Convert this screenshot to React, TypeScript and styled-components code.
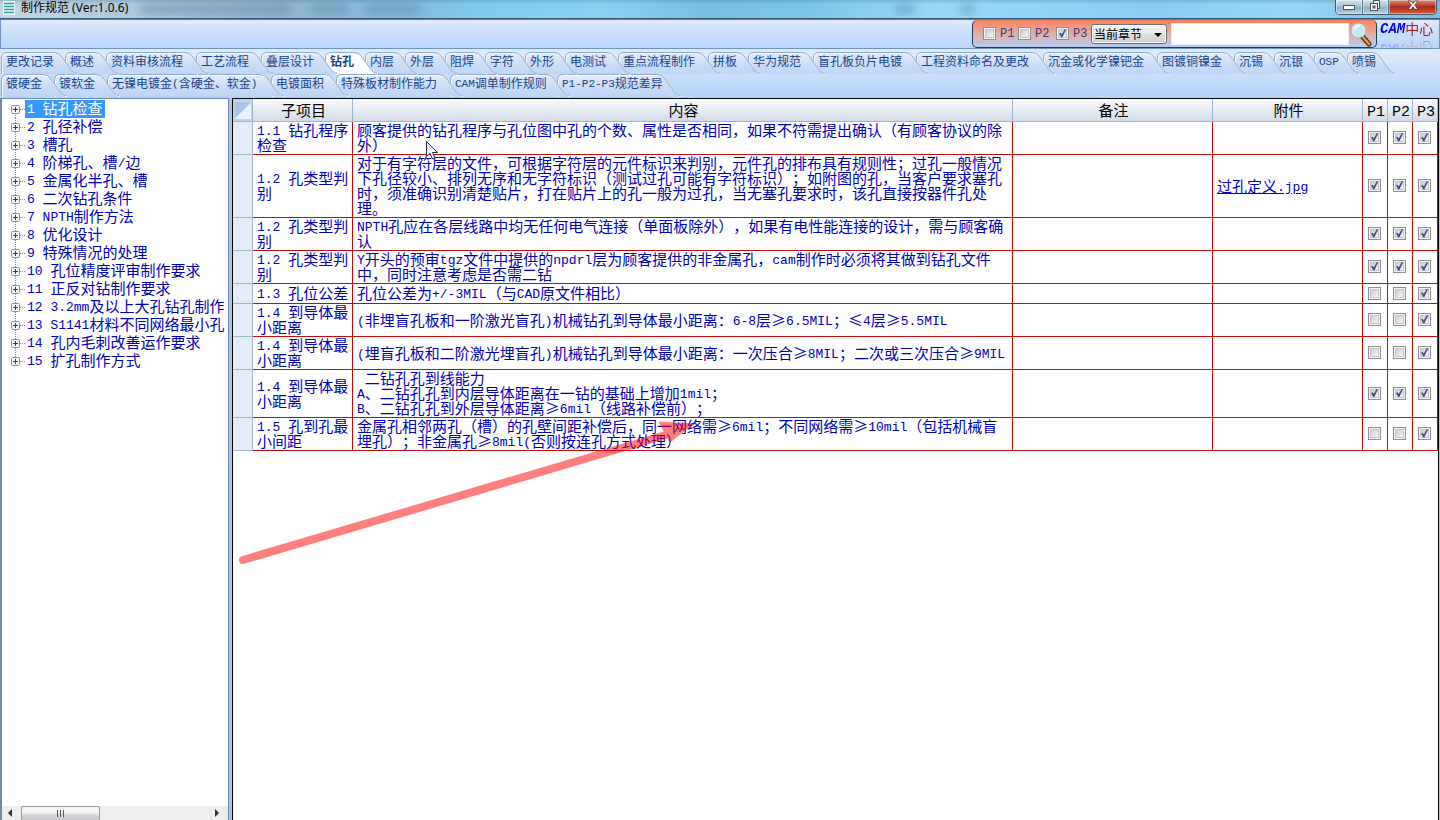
import React, { useState } from 'react';
import styled, { createGlobalStyle, css } from 'styled-components';

const cjk = '"Noto Sans CJK SC", sans-serif';

const GlobalStyle = createGlobalStyle`
  *, *::before, *::after { box-sizing: border-box; }
  html, body { margin: 0; height: 100%; }
  body { font-family: ${cjk}; font-size: 12px; text-spacing-trim: space-all; background: #fff; overflow: hidden; }
  #root { height: 100%; }
  button, input, select { font: inherit; margin: 0; }
`;

const Window = styled.div`
  display: flex;
  flex-direction: column;
  height: 100vh;
`;

/* ---------- title bar ---------- */

const TitleBar = styled.header`
  position: relative;
  display: flex;
  align-items: flex-start;
  height: 19px;
  flex: none;
  padding: 0 3px;
  gap: 6px;
  overflow: hidden;
  border-bottom: 1px solid #33597e;
  background: linear-gradient(to bottom, rgba(60, 110, 150, 0.3), transparent 4px),
    linear-gradient(to right, #c3d6e3 0, #a9c6da 11%, #8fb6d2 20%, #86bcdc 29%, #7fcbea 33%, #88d2f0 42%, #76bfdf 49%, #7cc6e5 56%, #98d8f3 65%, #8acdf0 80%, #96d6f2 90%, #7fbcd9 100%);
`;

const Haze = styled.span<{ $x: number; $w: number }>`
  position: absolute;
  left: ${(p) => p.$x}px;
  top: 5px;
  width: ${(p) => p.$w}px;
  height: 8px;
  background: #46698a;
  opacity: 0.4;
  filter: blur(4px);
`;

const AppIcon = styled.svg`
  flex: none;
  margin-top: 1px;
`;

const Title = styled.h1`
  position: relative;
  flex: 1;
  margin: 0;
  font: 400 12px/16px "Noto Sans", ${cjk};
  color: #000;
`;

const WindowButtons = styled.div`
  position: relative;
  display: flex;
  width: 102px;
  height: 15px;
  border: 1px solid #44586a;
  border-top: 0;
  border-radius: 0 0 5px 5px;
  overflow: hidden;
`;

const WindowButton = styled.button<{ $close?: boolean }>`
  display: flex;
  align-items: center;
  justify-content: center;
  flex: ${(p) => (p.$close ? '0 0 47px' : '1')};
  padding: 0 0 3px;
  border: 0;
  border-right: ${(p) => (p.$close ? '0' : '1px solid #5c7385')};
  box-shadow: inset 0 0 0 1px rgba(255, 255, 255, 0.45);
  background: ${(p) =>
    p.$close
      ? 'linear-gradient(#d58a7c 0, #c4543f 30%, #b02a14 50%, #cf5a3c 100%)'
      : 'linear-gradient(#cfe0ea 0, #b4cedd 35%, #92b3c6 55%, #b5d4e4 100%)'};
`;

/* ---------- tool bar ---------- */

const ToolBar = styled.div`
  display: flex;
  justify-content: flex-end;
  flex: none;
  height: 30px;
  border: 1px solid #6f94c4;
  border-top-color: #5c83b4;
  background: linear-gradient(#e0ebfc, #cadffd 45%, #b9d6fc);
`;

const SearchPanel = styled.form`
  display: flex;
  align-items: center;
  width: 405px;
  height: 28px;
  padding: 0 4px 0 10px;
  border: solid #1c3763;
  border-width: 0 1px 1px;
  border-radius: 5px;
  background: linear-gradient(#f47e5c 0, #f29a80 25%, #d9b4b4 60%, #b4cdf6 100%);
`;

const CheckLabel = styled.label<{ $width: number }>`
  display: flex;
  align-items: center;
  gap: 4px;
  width: ${(p) => p.$width}px;
  font: 12px/14px "Liberation Mono", monospace;
  color: #3d3a74;
`;

const Check = styled.input.attrs({ type: 'checkbox' })`
  appearance: none;
  position: relative;
  display: block;
  flex: none;
  width: 13px;
  height: 13px;
  border: 1px solid #8e8f8f;
  background: #f4f4f4;
  &::before {
    content: '';
    position: absolute;
    inset: 1px;
    border: 1px solid #c3c8cc;
    background: linear-gradient(135deg, #c9cdd2, #f6f6f6);
  }
  &:checked::after {
    content: '';
    position: absolute;
    inset: 1px;
    background: #3c4f8c;
    clip-path: polygon(12% 50%, 28% 42%, 42% 62%, 74% 4%, 92% 4%, 48% 94%, 36% 94%);
  }
`;

const Scope = styled.div`
  position: relative;
  width: 76px;
  height: 20px;
  &::after {
    content: '';
    position: absolute;
    right: 5px;
    top: 9px;
    border: 4px solid transparent;
    border-top-color: #000;
    pointer-events: none;
  }
`;

const ScopeSelect = styled.select`
  appearance: none;
  width: 100%;
  height: 20px;
  padding: 0 2px;
  border: 1px solid #707070;
  border-radius: 3px;
  box-shadow: inset 0 0 0 1px #fcfcfc;
  background: linear-gradient(#f2f2f2 0, #ebebeb 50%, #dddddd 50%, #cfcfcf);
  font-size: 12px;
  line-height: 16px;
  color: #000;
`;

const SearchInput = styled.input`
  flex: 1;
  min-width: 0;
  height: 22px;
  margin-left: 4px;
  padding: 0 3px;
  border: 1px solid #e8eef8;
  border-radius: 0;
  background: #fff;
`;

const SearchButton = styled.button`
  width: 23px;
  height: 26px;
  padding: 0;
  border: 0;
  background: none;
`;

const Logo = styled.div`
  display: flex;
  align-items: center;
  width: 62px;
  height: 18px;
  padding-left: 3px;
  white-space: nowrap;
  -webkit-box-reflect: below 1px linear-gradient(transparent 40%, rgba(0, 0, 0, 0.45));
`;

const LogoLatin = styled.span`
  font: italic 700 14px/18px "Liberation Mono", monospace;
  color: #0000f0;
`;

const LogoCjk = styled.span`
  height: 18px;
  font-size: 14px;
  line-height: 16px;
  color: #a51c24;
`;

/* ---------- tabs ---------- */

const TabArea = styled.nav`
  flex: none;
  padding: 3px 0 2px 1px;
  background: linear-gradient(#dfebfc, #b5d3fb);
`;

const TabRow = styled.div`
  display: flex;
  height: 22px;
`;

const TabButton = styled.button<{ $width: number; $order: number; $active?: boolean }>`
  position: relative;
  z-index: ${(p) => p.$order};
  flex: none;
  width: ${(p) => p.$width}px;
  height: 22px;
  padding: 0 0 4px 5px;
  border: 0;
  background: none;
  text-align: left;
  white-space: nowrap;
  font-size: 12px;
  line-height: 18px;
  color: #15428b;
  ${(p) =>
    p.$active &&
    css`
      font-weight: 700;
    `}
`;

const TabShape = styled.svg`
  position: absolute;
  left: 0;
  top: 0;
  overflow: visible;
`;

const TabText = styled.span`
  position: relative;
`;

const Latin = styled.span`
  font-family: "Liberation Mono", monospace;
  font-size: 13px;
  line-height: 8px;
  vertical-align: 1px;
  ${TabText} & {
    font-size: 11px;
  }
  th & {
    font-size: 15px;
    vertical-align: baseline;
  }
`;

/* ---------- body ---------- */

const Body = styled.main`
  display: flex;
  flex: 1;
  min-height: 0;
  background: linear-gradient(to right, #8298bd 0, #8298bd 1px, #a9c5ea 1px);
`;

const TreePanel = styled.aside`
  display: flex;
  flex-direction: column;
  flex: none;
  width: 229px;
  border: solid #7288a8;
  border-width: 1px 1px 0 2px;
  background: #fff;
`;

const Tree = styled.ul`
  flex: 1;
  min-height: 0;
  margin: 0;
  padding: 1px 0 0 9px;
  list-style: none;
  overflow: hidden;
`;

const TreeItem = styled.li`
  display: flex;
  align-items: center;
  height: 18px;
`;

const Expander = styled.button`
  flex: none;
  width: 14px;
  height: 18px;
  padding: 0;
  border: 0;
  background: none;
  svg {
    display: block;
  }
`;

const TreeText = styled.span<{ $selected?: boolean }>`
  height: 18px;
  padding: 0 2px;
  font-size: 15px;
  line-height: 16px;
  white-space: pre;
  color: ${(p) => (p.$selected ? '#fff' : '#0000b4')};
  background: ${(p) => (p.$selected ? '#3399ff' : 'none')};
`;

const ScrollBar = styled.div`
  display: flex;
  align-items: center;
  flex: none;
  height: 14px;
  background: #ededed;
`;

const ScrollArrow = styled.button<{ $right?: boolean }>`
  flex: none;
  width: 19px;
  height: 14px;
  padding: 0 0 0 6px;
  border: 0;
  background: none;
  &::before {
    content: '';
    display: block;
    width: 4px;
    height: 8px;
    background: #333;
    clip-path: ${(p) =>
      p.$right ? 'polygon(0 0, 100% 50%, 0 100%)' : 'polygon(100% 0, 0 50%, 100% 100%)'};
  }
`;

const ScrollTrack = styled.div`
  flex: 1;
  height: 14px;
`;

const ScrollThumb = styled.div`
  display: flex;
  align-items: center;
  justify-content: center;
  gap: 2px;
  width: 79px;
  height: 14px;
  border: 1px solid #979797;
  border-bottom: 0;
  border-radius: 2px 2px 0 0;
  background: linear-gradient(#f5f5f5 45%, #dcdcdc 55%, #c6c6ca);
  i {
    width: 1px;
    height: 7px;
    background: #555;
  }
`;

const GridPanel = styled.section`
  position: relative;
  flex: 1;
  min-width: 0;
  margin-left: 3px;
  margin-right: 1px;
  border: 1px solid #000;
  border-bottom: 0;
  background: #fff;
`;

const Table = styled.table`
  width: 100%;
  table-layout: fixed;
  border-collapse: separate;
  border-spacing: 0;
  font-size: 15px;
  line-height: 15px;
`;

const HeadCell = styled.th`
  height: 23px;
  padding: 0 0 1px 2px;
  border: solid #9eb6ce;
  border-width: 0 1px 1px 0;
  background: linear-gradient(#f9fbfd, #e7ecf4 50%, #d3dbe9);
  font-weight: 400;
  white-space: nowrap;
  color: #000;
`;

const Corner = styled(HeadCell)`
  background: linear-gradient(135deg, #a9c4e9 50%, #e9f1fb 50%) center / 16px 17px no-repeat, #bcd2ee;
`;

const RowHead = styled.th`
  padding: 0;
  border: solid #9eb6ce;
  border-width: 0 1px 1px 0;
  background: #e4ecf7;
`;

const Cell = styled.td`
  height: 20px;
  padding: 0 3px 2px 4px;
  border: solid #c00d0d;
  border-width: 0 1px 1px 0;
  vertical-align: middle;
  white-space: pre;
  color: #0000b4;
`;

const CheckCell = styled(Cell)`
  padding: 0 5px 1px;
`;

const FileLink = styled.a`
  color: #0000c8;
  text-decoration: underline;
`;

const Overlay = styled.svg`
  position: absolute;
  left: 0;
  top: 0;
  pointer-events: none;
`;

/* ---------- data ---------- */

type TabItem = [label: string, width: number];

const tabRows: TabItem[][] = [
  [
    ['更改记录', 64], ['概述', 41], ['资料审核流程', 90], ['工艺流程', 65], ['叠层设计', 64],
    ['钻孔', 40], ['内层', 40], ['外层', 40], ['阻焊', 40], ['字符', 40], ['外形', 40],
    ['电测试', 53], ['重点流程制作', 90], ['拼板', 40], ['华为规范', 65], ['盲孔板负片电镀', 103],
    ['工程资料命名及更改', 127], ['沉金或化学镍钯金', 114], ['图镀铜镍金', 77], ['沉锡', 40],
    ['沉银', 40], ['OSP', 33], ['喷锡', 36],
  ],
  [
    ['镀硬金', 53], ['镀软金', 53], ['无镍电镀金(含硬金、软金)', 164], ['电镀面积', 65],
    ['特殊板材制作能力', 114], ['CAM调单制作规则', 107], ['P1-P2-P3规范差异', 111],
  ],
];

const treeItems = [
  '1 钻孔检查', '2 孔径补偿', '3 槽孔', '4 阶梯孔、槽/边', '5 金属化半孔、槽', '6 二次钻孔条件',
  '7 NPTH制作方法', '8 优化设计', '9 特殊情况的处理', '10 孔位精度评审制作要求', '11 正反对钻制作要求',
  '12 3.2mm及以上大孔钻孔制作', '13 S1141材料不同网络最小孔', '14 孔内毛刺改善运作要求', '15 扩孔制作方式',
];

interface Rule {
  item: string;
  content: string;
  file?: string;
  levels: [boolean, boolean, boolean];
}

const rules: Rule[] = [
  { item: '1.1 钻孔程序\n检查', content: '顾客提供的钻孔程序与孔位图中孔的个数、属性是否相同，如果不符需提出确认（有顾客协议的除\n外）', levels: [true, true, true] },
  { item: '1.2 孔类型判\n别', content: '对于有字符层的文件，可根据字符层的元件标识来判别，元件孔的排布具有规则性；过孔一般情况\n下孔径较小、排列无序和无字符标识（测试过孔可能有字符标识）；如附图的孔，当客户要求塞孔\n时，须准确识别清楚贴片，打在贴片上的孔一般为过孔，当无塞孔要求时，该孔直接按器件孔处\n理。', file: '过孔定义.jpg', levels: [true, true, true] },
  { item: '1.2 孔类型判\n别', content: 'NPTH孔应在各层线路中均无任何电气连接（单面板除外），如果有电性能连接的设计，需与顾客确\n认', levels: [true, true, true] },
  { item: '1.2 孔类型判\n别', content: 'Y开头的预审tgz文件中提供的npdrl层为顾客提供的非金属孔，cam制作时必须将其做到钻孔文件\n中，同时注意考虑是否需二钻', levels: [true, true, true] },
  { item: '1.3 孔位公差', content: '孔位公差为+/-3MIL（与CAD原文件相比）', levels: [false, false, true] },
  { item: '1.4 到导体最\n小距离', content: '(非埋盲孔板和一阶激光盲孔)机械钻孔到导体最小距离：6-8层≥6.5MIL；≤4层≥5.5MIL', levels: [false, false, true] },
  { item: '1.4 到导体最\n小距离', content: '(埋盲孔板和二阶激光埋盲孔)机械钻孔到导体最小距离：一次压合≥8MIL；二次或三次压合≥9MIL', levels: [false, false, true] },
  { item: '1.4 到导体最\n小距离', content: ' 二钻孔孔到线能力\nA、二钻孔孔到内层导体距离在一钻的基础上增加1mil；\nB、二钻孔孔到外层导体距离≥6mil（线路补偿前）；', levels: [true, true, true] },
  { item: '1.5 孔到孔最\n小间距', content: '金属孔相邻两孔（槽）的孔壁间距补偿后，同一网络需≥6mil；不同网络需≥10mil（包括机械盲\n埋孔）；非金属孔≥8mil(否则按连孔方式处理）', levels: [false, false, true] },
];

const levelNames = ['P1', 'P2', 'P3'];

/* ---------- components ---------- */

/** Sets half-width runs in the monospaced face and leaves full-width text as is. */
function Mixed({ text }: { text: string }) {
  return (
    <>
      {text.split(/([ -~]+)/).map((run, i) => (i % 2 ? <Latin key={i}>{run}</Latin> : run))}
    </>
  );
}

function Tab({ label, width, order, active, onSelect }: {
  label: string; width: number; order: number; active: boolean; onSelect: () => void;
}) {
  const edge = `M.5 22V6Q.5 .5 6 .5H${width - 11}Q${width - 6} .5 ${width - 3} 5L${width + 7} 19Q${width + 9} 21 ${width + 12} 21.5`;
  return (
    <TabButton $width={width} $order={order} $active={active} onClick={onSelect}>
      <TabShape width={width} height="22" aria-hidden="true">
        <path d={`${edge}V22H.5Z`} fill={active ? '#fff' : 'url(#tabFill)'} />
        <path d={edge} fill="none" stroke="#fff" strokeOpacity=".8" transform="translate(1 1)" />
        <path d={edge} fill="none" stroke="#93abd0" />
      </TabShape>
      <TabText><Mixed text={label} /></TabText>
    </TabButton>
  );
}

export default function App() {
  const [activeTab, setActiveTab] = useState('钻孔');
  const [selected, setSelected] = useState(0);

  return (
    <Window>
      <GlobalStyle />
      <TitleBar>
        <Haze $x={140} $w={150} />
        <Haze $x={312} $w={36} />
        <Haze $x={366} $w={54} />
        <Haze $x={895} $w={20} />
        <Haze $x={960} $w={14} />
        <AppIcon width="12" height="14" viewBox="0 0 12 14" aria-hidden="true">
          <rect width="12" height="14" fill="#eefafa" />
          <path d="M1 2.5h10M1 5.5h10M1 8.5h10M1 11.5h10" stroke="#2b9aa5" strokeWidth="1.5" />
        </AppIcon>
        <Title>制作规范 (Ver:1.0.6)</Title>
        <WindowButtons>
          <WindowButton aria-label="最小化">
            <svg width="14" height="11"><rect x="1.5" y="5.5" width="11" height="4" fill="#fff" stroke="#46525e" /></svg>
          </WindowButton>
          <WindowButton aria-label="还原">
            <svg width="12" height="12">
              <path d="M4.500 .5H10.500V8.500H8M4.500 3V.5" fill="#fff" stroke="#46525e" />
              <rect x="1.500" y="3.500" width="7" height="7" fill="#fff" stroke="#46525e" />
              <rect x="4" y="6" width="2" height="2" fill="#9ab" stroke="#46525e" />
            </svg>
          </WindowButton>
          <WindowButton $close aria-label="关闭">
            <svg width="14" height="11"><path d="M2 1H5L7 3.500L9 1H12L8.800 5L12 9.500H9L7 7L5 9.500H2L5.200 5Z" fill="#fff" stroke="#5b2a2a" strokeWidth=".8" /></svg>
          </WindowButton>
        </WindowButtons>
      </TitleBar>

      <ToolBar>
        <SearchPanel onSubmit={(e) => e.preventDefault()}>
          <CheckLabel $width={35}><Check />P1</CheckLabel>
          <CheckLabel $width={38}><Check />P2</CheckLabel>
          <CheckLabel $width={35}><Check defaultChecked />P3</CheckLabel>
          <Scope>
            <ScopeSelect aria-label="范围"><option>当前章节</option></ScopeSelect>
          </Scope>
          <SearchInput type="text" aria-label="搜索内容" />
          <SearchButton aria-label="搜索">
            <svg width="23" height="26" viewBox="0 0 23 26">
              <path d="M13 15L20 23" stroke="#5a3510" strokeWidth="5" strokeLinecap="round" />
              <path d="M14 16L20 23" stroke="#e89a3c" strokeWidth="2.500" strokeLinecap="round" />
              <circle cx="9.500" cy="9.500" r="6.500" fill="#c5e9f4" stroke="#e4eef2" strokeWidth="1.500" />
              <circle cx="9.500" cy="9.500" r="7.300" fill="none" stroke="#8fa9b5" strokeWidth=".6" />
              <path d="M5.500 8.500Q7 5 11 5" fill="none" stroke="#fff" strokeWidth="1.500" />
            </svg>
          </SearchButton>
        </SearchPanel>
        <Logo><LogoLatin>CAM</LogoLatin><LogoCjk>中心</LogoCjk></Logo>
      </ToolBar>

      <TabArea>
        <svg width="0" height="0" style={{ position: 'absolute' }} aria-hidden="true">
          <linearGradient id="tabFill" x1="0" y1="0" x2="0" y2="1">
            <stop offset="0" stopColor="#e3edfb" />
            <stop offset=".5" stopColor="#cddff7" />
            <stop offset="1" stopColor="#bcd5f8" />
          </linearGradient>
        </svg>
        {tabRows.map((row, r) => (
          <TabRow key={r}>
            {row.map(([label, width], i) => (
              <Tab
                key={label}
                label={label}
                width={width}
                order={row.length - i}
                active={label === activeTab}
                onSelect={() => setActiveTab(label)}
              />
            ))}
          </TabRow>
        ))}
      </TabArea>

      <Body>
        <TreePanel>
          <Tree>
            {treeItems.map((text, i) => (
              <TreeItem key={text} onClick={() => setSelected(i)}>
                <Expander aria-label="展开">
                  <svg width="14" height="18">
                    <path
                      d={`M4.500 ${i === 0 ? 9 : 0}V${i === treeItems.length - 1 ? 9 : 18}M9 9.500H14`}
                      stroke="#8c8c8c"
                      strokeDasharray="1 1"
                    />
                    <rect x=".5" y="5.500" width="8" height="8" rx="1" fill="#f6f6f6" stroke="#8e8e8e" />
                    <path d="M2 9.500H7M4.500 7V12" stroke="#23407c" />
                  </svg>
                </Expander>
                <TreeText $selected={i === selected}><Mixed text={text} /></TreeText>
              </TreeItem>
            ))}
          </Tree>
          <ScrollBar>
            <ScrollArrow aria-label="向左" />
            <ScrollTrack><ScrollThumb><i /><i /><i /></ScrollThumb></ScrollTrack>
            <ScrollArrow $right aria-label="向右" />
          </ScrollBar>
        </TreePanel>

        <GridPanel>
          <Table>
            <colgroup>
              <col width="20" /><col width="100" /><col /><col width="200" /><col width="150" />
              <col width="25" /><col width="25" /><col width="25" />
            </colgroup>
            <thead>
              <tr>
                <Corner />
                {['子项目', '内容', '备注', '附件', ...levelNames].map((name) => (
                  <HeadCell key={name} scope="col"><Mixed text={name} /></HeadCell>
                ))}
              </tr>
            </thead>
            <tbody>
              {rules.map((rule, r) => (
                <tr key={r}>
                  <RowHead scope="row" />
                  <Cell><Mixed text={rule.item} /></Cell>
                  <Cell><Mixed text={rule.content} /></Cell>
                  <Cell />
                  <Cell>{rule.file && <FileLink href="#file"><Mixed text={rule.file} /></FileLink>}</Cell>
                  {rule.levels.map((on, i) => (
                    <CheckCell key={i}>
                      <Check defaultChecked={on} aria-label={levelNames[i]} />
                    </CheckCell>
                  ))}
                </tr>
              ))}
            </tbody>
          </Table>
          <Overlay width="480" height="480" aria-hidden="true">
            <g opacity=".5">
              <path d="M10 461L436 335" stroke="#f00" strokeWidth="8" strokeLinecap="round" />
              <path d="M426 323L460 325L437 343Z" fill="#f00" stroke="#f00" strokeLinejoin="round" />
            </g>
            <path d="M193.500 42.500V57.500L197 54.500L199.500 60L202 59L199.500 53.500H204.500Z" fill="#f4f6fb" stroke="#222a44" />
          </Overlay>
        </GridPanel>
      </Body>
    </Window>
  );
}
